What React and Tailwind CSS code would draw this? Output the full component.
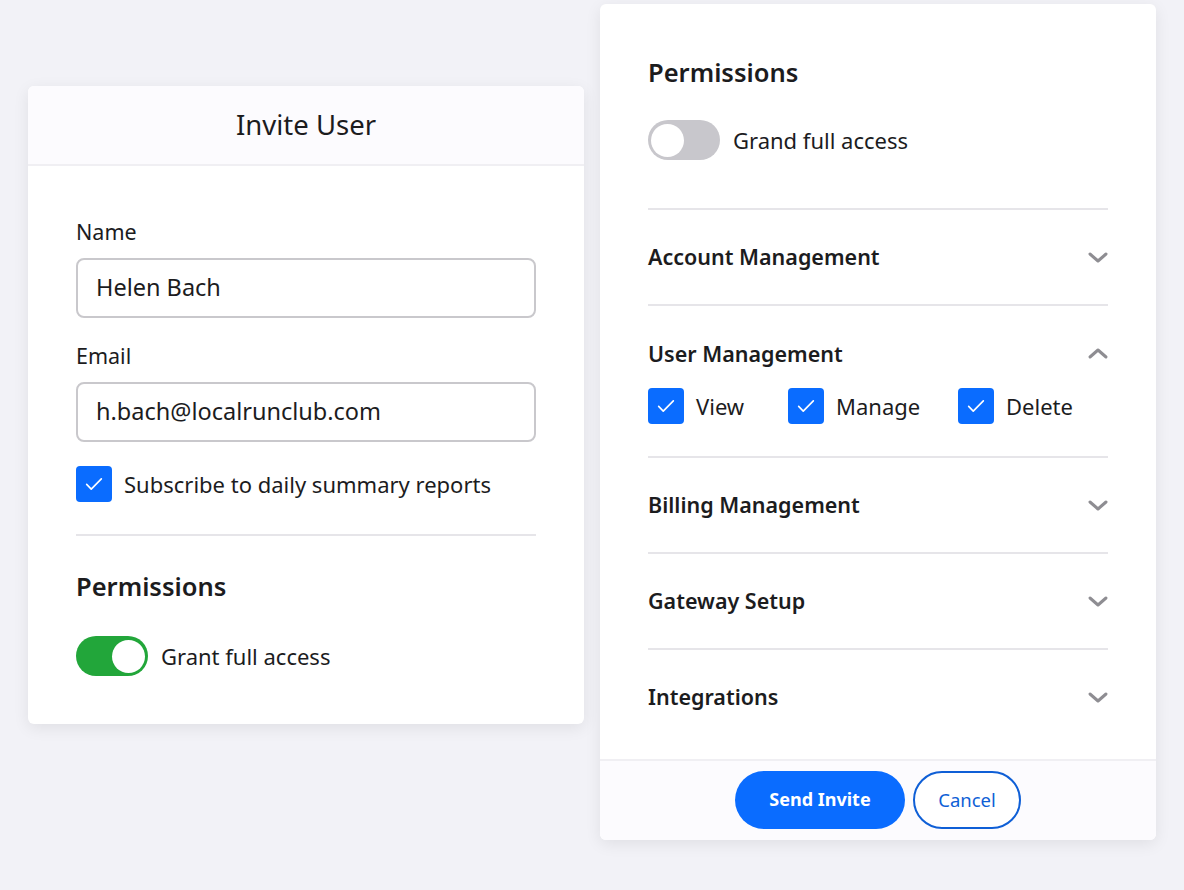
import React from "react";

const font = { fontFamily: '"Noto Sans", "Open Sans", sans-serif' };

function Check() {
  return (
    <span className="flex h-[36px] w-[36px] shrink-0 items-center justify-center rounded-[4px] bg-[#0a6cff]">
      <svg width="22" height="22" viewBox="0 0 24 24" fill="none" stroke="white" strokeWidth="1.8" strokeLinecap="round" strokeLinejoin="round">
        <path d="M4 12.5l5 5L20 6.5" />
      </svg>
    </span>
  );
}

function Chevron({ up }) {
  return (
    <svg width="24" height="24" viewBox="0 0 24 24" fill="none" stroke="#8e8d92" strokeWidth="3" strokeLinecap="round" strokeLinejoin="round">
      {up ? <path d="M4 15l8-7 8 7" /> : <path d="M4 9l8 7 8-7" />}
    </svg>
  );
}

function Row({ title }) {
  return (
    <div className="flex h-[96px] items-center justify-between border-t-2 border-[#e6e5e9]">
      <span className="text-[21.5px] font-semibold leading-[28px] text-[#1c1c1e]">{title}</span>
      <span className="mr-[-2px]"><Chevron /></span>
    </div>
  );
}

export default function App() {
  return (
    <div className="min-h-[890px] w-full bg-[#f2f2f7]" style={font}>
      <div className="flex items-start gap-[16px] pl-[28px] pt-[4px]">
        <div className="mt-[82px] w-[556px] overflow-hidden rounded-[6px] bg-white shadow-[0_4px_16px_rgba(0,0,0,0.08)]">
          <div className="flex h-[80px] items-center justify-center border-b-2 border-[#f0eff3] bg-[#fcfbfe]">
            <span className="text-[27.5px] leading-[36px] text-[#1c1c1e]">Invite User</span>
          </div>
          <div className="px-[48px] pb-[48px] pt-[52px]">
            <div className="text-[21.5px] leading-[28px] text-[#1c1c1e]">Name</div>
            <div className="mt-[12px] flex h-[60px] items-center rounded-[8px] border-2 border-[#c9c8cc] px-[18px] text-[23.5px] text-[#1c1c1e]">Helen Bach</div>
            <div className="mt-[24px] text-[21.5px] leading-[28px] text-[#1c1c1e]">Email</div>
            <div className="mt-[12px] flex h-[60px] items-center rounded-[8px] border-2 border-[#c9c8cc] px-[18px] text-[23.5px] text-[#1c1c1e]">h.bach@localrunclub.com</div>
            <div className="mt-[24px] flex items-center gap-[12px]">
              <Check />
              <span className="text-[22px] leading-[30px] text-[#1c1c1e]">Subscribe to daily summary reports</span>
            </div>
            <div className="mt-[32px] border-t-2 border-[#e6e5e9]" />
            <div className="mt-[34px] text-[25.5px] font-semibold leading-[32px] text-[#1c1c1e]">Permissions</div>
            <div className="mt-[34px] flex items-center gap-[13px]">
              <span className="flex h-[40px] w-[72px] items-center justify-end rounded-full bg-[#22a63a] pr-[3px]">
                <span className="h-[33px] w-[33px] rounded-full bg-white" />
              </span>
              <span className="text-[22px] leading-[30px] text-[#1c1c1e]">Grant full access</span>
            </div>
          </div>
        </div>

        <div className="w-[556px] overflow-hidden rounded-[6px] bg-white shadow-[0_4px_16px_rgba(0,0,0,0.08)]">
          <div className="px-[48px] pt-[52px]">
            <div className="text-[25.5px] font-semibold leading-[32px] text-[#1c1c1e]">Permissions</div>
            <div className="mt-[32px] flex items-center gap-[13px]">
              <span className="flex h-[40px] w-[72px] items-center rounded-full bg-[#c8c7cc] pl-[3px]">
                <span className="h-[33px] w-[33px] rounded-full bg-white" />
              </span>
              <span className="text-[22px] leading-[30px] text-[#1c1c1e]">Grand full access</span>
            </div>
            <div className="mt-[48px]">
              <Row title="Account Management" />
              <div className="border-t-2 border-[#e6e5e9] pb-[32px] pt-[34px]">
                <div className="flex items-center justify-between">
                  <span className="text-[21.5px] font-semibold leading-[28px] text-[#1c1c1e]">User Management</span>
                  <span className="mr-[-2px]"><Chevron up /></span>
                </div>
                <div className="mt-[20px] flex items-center">
                  <div className="flex w-[140px] items-center gap-[12px]"><Check /><span className="text-[22px] leading-[30px] text-[#1c1c1e]">View</span></div>
                  <div className="flex w-[170px] items-center gap-[12px]"><Check /><span className="text-[22px] leading-[30px] text-[#1c1c1e]">Manage</span></div>
                  <div className="flex items-center gap-[12px]"><Check /><span className="text-[22px] leading-[30px] text-[#1c1c1e]">Delete</span></div>
                </div>
              </div>
              <Row title="Billing Management" />
              <Row title="Gateway Setup" />
              <Row title="Integrations" />
            </div>
          </div>
          <div className="mt-[15px] flex h-[81px] items-center justify-center gap-[8px] border-t-2 border-[#f0eff3] bg-[#fcfbfe] pb-[2px]">
            <span className="flex h-[58px] w-[170px] items-center justify-center rounded-full bg-[#0a6cff] text-[18px] font-bold text-white">Send Invite</span>
            <span className="flex h-[58px] w-[108px] items-center justify-center rounded-full border-2 border-[#0f5fd6] bg-white text-[18.5px] text-[#0f5fd6]">Cancel</span>
          </div>
        </div>
      </div>
    </div>
  );
}
